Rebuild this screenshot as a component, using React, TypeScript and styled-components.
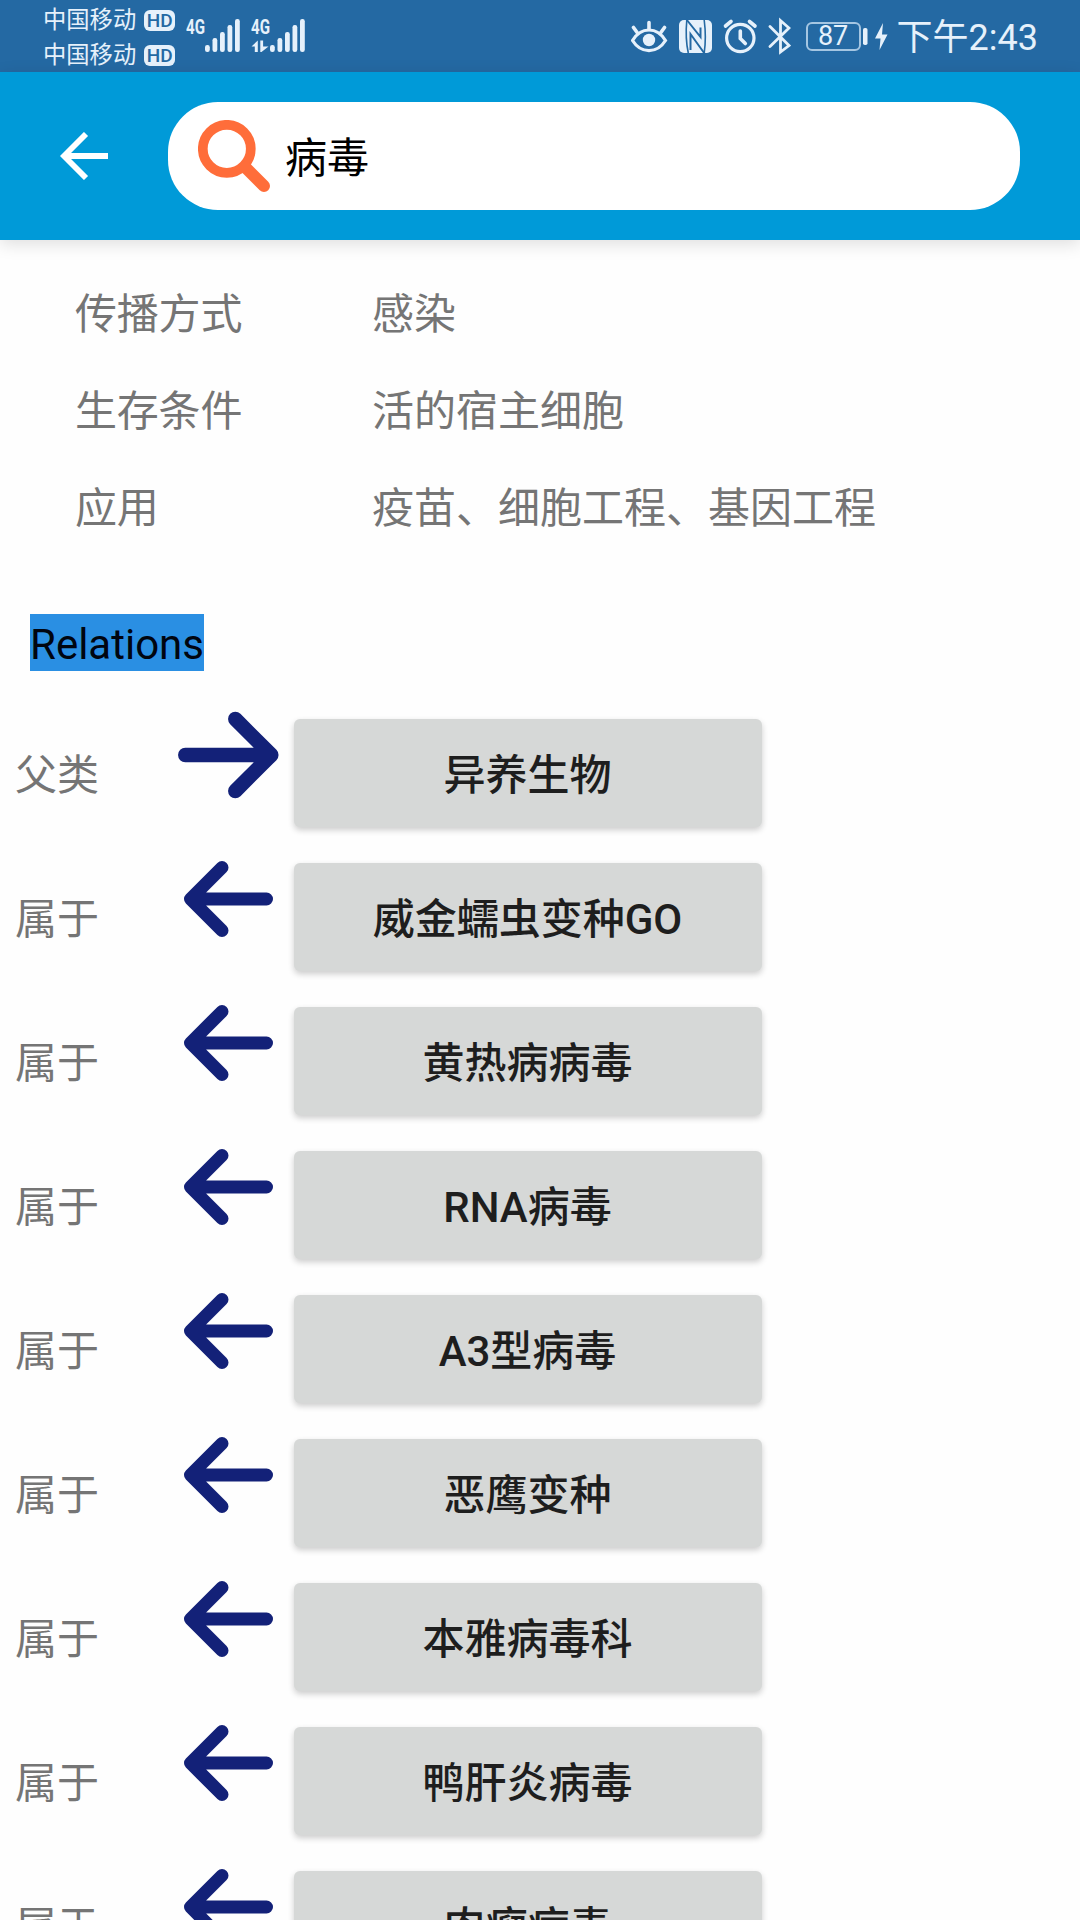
import React from "react";
import styled, { createGlobalStyle } from "styled-components";

const GlobalStyle = createGlobalStyle`
  * { box-sizing: border-box; }
  body { margin: 0; background: #fefefe; }
  svg { display: block; flex: none; }
`;

const ICE = "#e6f1fb";
const STATUS_BLUE = "#2469a3";
const NAVY = "#132178";

const Screen = styled.div`
  display: flex;
  flex-direction: column;
  width: 1080px;
  height: 1920px;
  overflow: hidden;
  background: #fefefe;
  font-family: Roboto, "Noto Sans CJK SC", sans-serif;
  font-size: 42px;
  color: #757575;
`;

const StatusBar = styled.div`
  display: flex;
  flex: none;
  justify-content: space-between;
  height: 72px;
  padding: 0 42px 0 43px;
  background: ${STATUS_BLUE};
  color: ${ICE};
`;

const StatusGroup = styled.div`
  display: flex;
  align-items: flex-start;
`;

const Carriers = styled.div`
  display: flex;
  flex-direction: column;
  padding-top: 3px;
`;

const Carrier = styled.div`
  display: flex;
  align-items: center;
  gap: 8px;
  height: 35px;
  font-size: 23.3px;
  line-height: 35px;
`;

const HdBadge = styled.span`
  display: flex;
  align-items: center;
  justify-content: center;
  width: 31px;
  height: 21px;
  border-radius: 6px;
  background: ${ICE};
  color: ${STATUS_BLUE};
  font-size: 19px;
  font-weight: 500;
  line-height: 21px;
`;

const Signal = styled.div<{ $gap: number }>`
  display: grid;
  width: 54px;
  margin: 17px 0 0 ${(p) => p.$gap}px;
  > * { grid-area: 1 / 1; }
`;

const Network = styled.span`
  width: 28px;
  height: 20px;
  font-size: 21px;
  font-weight: 700;
  line-height: 21px;
  transform: scaleX(0.72);
  transform-origin: left top;
`;

const Battery = styled.div`
  display: flex;
  align-items: center;
  justify-content: center;
  width: 55px;
  height: 29px;
  margin: 22px 2px 0 15px;
  border: 2px solid #a5c6e2;
  border-radius: 6px;
  font-size: 27px;
  line-height: 29px;
`;

const Clock = styled.span`
  margin-left: 8px;
  padding-top: 11px;
  font-size: 36px;
  line-height: 54px;
  white-space: nowrap;
`;

const Header = styled.header`
  display: flex;
  flex: none;
  align-items: center;
  gap: 60px;
  height: 168px;
  padding: 0 60px;
  background: #009ad8;
  box-shadow: 0 4px 16px rgba(0, 0, 0, 0.13);
`;

const SearchBox = styled.div`
  display: flex;
  align-items: center;
  flex: 1;
  gap: 15px;
  height: 108px;
  padding: 0 30px;
  border-radius: 50px;
  background: #fff;
  color: #000;
`;

const Query = styled.span`
  padding-bottom: 4px;
`;

const Attributes = styled.section`
  display: grid;
  grid-template-columns: 297px 1fr;
  grid-auto-rows: 97px;
  align-items: center;
  flex: none;
  padding: 22px 0 3px 75px;
`;

const AttributeName = styled.span`
  letter-spacing: -0.2px;
`;

const SectionTitle = styled.h2`
  align-self: flex-start;
  flex: none;
  height: 57px;
  margin: 58px 0 30px 30px;
  background: #2a8fe3;
  color: #000510;
  font-size: 42px;
  font-weight: 400;
  line-height: 61px;
`;

const RelationRow = styled.div`
  display: grid;
  grid-template-columns: 161px 118px 468px;
  flex: none;
  height: 144px;
  padding: 18px 0 18px 15px;
`;

const RelationName = styled.span`
  line-height: 114px;
`;

const Arrow = styled.svg`
  margin: -10px 0 0 -0.5px;
  fill: none;
  stroke: ${NAVY};
  stroke-linecap: round;
  stroke-linejoin: round;
`;

const EntityButton = styled.button`
  height: 108px;
  padding: 0 1px 3px 0;
  border: 0;
  border-radius: 6px;
  background: #d6d8d7;
  box-shadow: 0 3px 6px rgba(0, 0, 0, 0.2);
  color: #1e1e1e;
  font: 500 42px Roboto, "Noto Sans CJK SC", sans-serif;
`;

const attributes = [
  ["传播方式", "感染"],
  ["生存条件", "活的宿主细胞"],
  ["应用", "疫苗、细胞工程、基因工程"],
];

const relations = [
  { name: "父类", entity: "异养生物", outgoing: true },
  { name: "属于", entity: "威金蠕虫变种GO" },
  { name: "属于", entity: "黄热病病毒" },
  { name: "属于", entity: "RNA病毒" },
  { name: "属于", entity: "A3型病毒" },
  { name: "属于", entity: "恶鹰变种" },
  { name: "属于", entity: "本雅病毒科" },
  { name: "属于", entity: "鸭肝炎病毒" },
  { name: "属于", entity: "肉瘤病毒" },
];

function SignalMeter({ gap, data }: { gap: number; data?: boolean }) {
  return (
    <Signal $gap={gap}>
      <Network>4G</Network>
      <svg width="54" height="38" fill={ICE}>
        {[28, 21, 15, 8, 2].map((y, i) => (
          <rect key={y} x={19 + i * 7.5} y={y} width="4.8" height={35 - y} rx="2.2" />
        ))}
        {data && <path d="M6.800 23.500V35H3.800V29.500H0.500ZM9.300 23.500h2.800V29.500H17.500L10.500 35H9.300Z" />}
      </svg>
    </Signal>
  );
}

function StatusIcons() {
  return (
    <svg width="160" height="72" viewBox="632 0 160 72" fill="none" stroke={ICE} strokeWidth="3.200">
      <path d="M633.5 40.500C642 26.500 658 26.500 666.500 40.500C658 54 642 54 633.500 40.500Z" />
      <path d="M650 22.500v7M634.500 27.500l4 5.500M665.500 27.500l-4 5.500" strokeWidth="3.600" strokeLinecap="round" />
      <circle cx="650" cy="40" r="6.200" fill={ICE} stroke="none" />
      <rect x="680" y="20" width="33" height="33" rx="5" fill={ICE} stroke="none" />
      <path d="M687.800 20c-1.300 14-0.500 24 1.500 33M705.200 20c1.300 10 1.300 24 0 33" stroke={STATUS_BLUE} strokeWidth="1.600" />
      <path d="M687.500 19.500L701.500 37V27.500M705.500 53.500L691.500 34V50" stroke={STATUS_BLUE} strokeWidth="2" />
      <circle cx="741.3" cy="38" r="13.700" />
      <path d="M741.3 31v7.500l5 5" strokeWidth="3.600" strokeLinecap="round" />
      <path d="M726.500 26l5.500-4.500M756 26l-5.500-4.500" strokeWidth="3.600" strokeLinecap="round" />
      <path d="M771 26.500L790 45.500L781.500 52V20.500L790 28L771 46.500" strokeWidth="2.800" strokeLinecap="round" />
    </svg>
  );
}

function RelationArrow({ outgoing }: { outgoing?: boolean }) {
  return (
    <Arrow width="110" height="92" viewBox="0 0 110 92" strokeWidth={outgoing ? 14.5 : 13}>
      {outgoing ? (
        <path d="M9.300 46H93M59.300 10L95.300 46L59.300 82" />
      ) : (
        <path d="M90.500 46H16M46 14.500L14.500 46L46 77.500" />
      )}
    </Arrow>
  );
}

export default function App() {
  return (
    <Screen>
      <GlobalStyle />
      <StatusBar>
        <StatusGroup>
          <Carriers>
            <Carrier>中国移动<HdBadge>HD</HdBadge></Carrier>
            <Carrier>中国移动<HdBadge>HD</HdBadge></Carrier>
          </Carriers>
          <SignalMeter gap={11} />
          <SignalMeter gap={11} data />
        </StatusGroup>
        <StatusGroup>
          <StatusIcons />
          <Battery>87</Battery>
          <svg width="26" height="72" fill={ICE}>
            <rect x="0" y="28" width="4.500" height="17" rx="1.800" />
            <path d="M20 23L12 38.500h5.500L16.500 50L24.500 34.500h-5.500Z" />
          </svg>
          <Clock>下午2:43</Clock>
        </StatusGroup>
      </StatusBar>
      <Header>
        <svg width="48" height="48" viewBox="0 0 48 48" fill="none" stroke="#fff" strokeWidth="5.800">
          <path d="M26 2L4 24L26 46M5 24H48" />
        </svg>
        <SearchBox>
          <svg width="72" height="72" viewBox="0 0 72 72" fill="none" stroke="#ff6d3a">
            <circle cx="28.800" cy="28.800" r="24" strokeWidth="9.700" />
            <path d="M47 47L66 66" strokeWidth="12" strokeLinecap="round" />
          </svg>
          <Query>病毒</Query>
        </SearchBox>
      </Header>
      <Attributes>
        {attributes.map(([label, value]) => (
          <React.Fragment key={label}>
            <AttributeName>{label}</AttributeName>
            <span>{value}</span>
          </React.Fragment>
        ))}
      </Attributes>
      <SectionTitle>Relations</SectionTitle>
      {relations.map((r) => (
        <RelationRow key={r.entity}>
          <RelationName>{r.name}</RelationName>
          <RelationArrow outgoing={r.outgoing} />
          <EntityButton>{r.entity}</EntityButton>
        </RelationRow>
      ))}
    </Screen>
  );
}
